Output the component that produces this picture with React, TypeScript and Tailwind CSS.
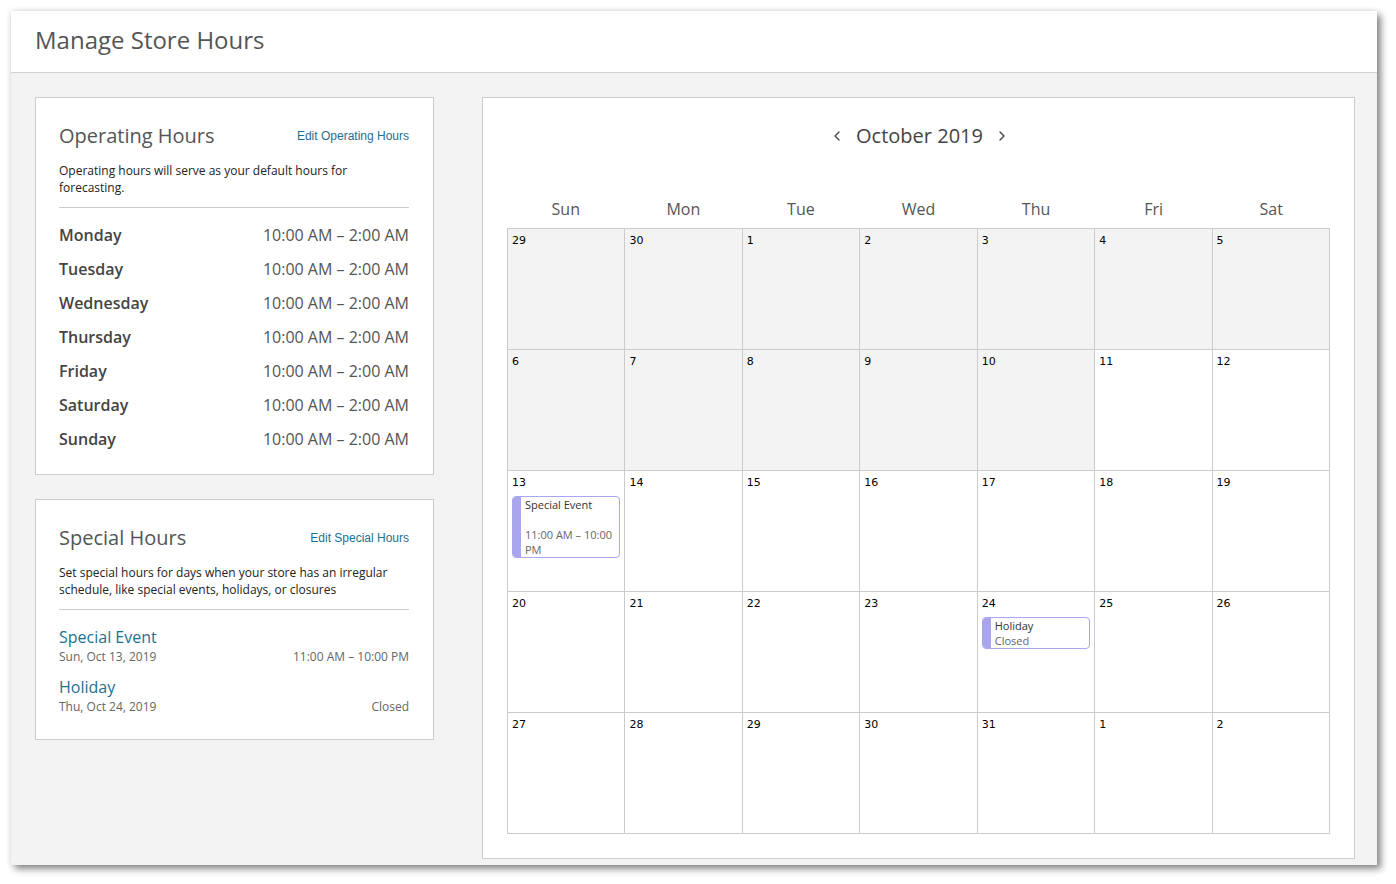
import { ChevronLeft, ChevronRight } from "lucide-react";

const days = ["Monday", "Tuesday", "Wednesday", "Thursday", "Friday", "Saturday", "Sunday"];
const weekdays = ["Sun", "Mon", "Tue", "Wed", "Thu", "Fri", "Sat"];

// 5 weeks, first row starts at Sep 29
const cells = [
  29, 30, 1, 2, 3, 4, 5,
  6, 7, 8, 9, 10, 11, 12,
  13, 14, 15, 16, 17, 18, 19,
  20, 21, 22, 23, 24, 25, 26,
  27, 28, 29, 30, 31, 1, 2,
];

const openSans = "font-['Open_Sans',_'Liberation_Sans',_sans-serif]";

function EventChip({ title, time, gap }: { title: string; time: string; gap?: boolean }) {
  return (
    <div className="ml-[4px] mr-[4px] mt-[6px] flex overflow-hidden rounded-[4px] border border-[#a9a5ef] bg-white">
      <div className="w-[8px] shrink-0 bg-[#aaa6ee]" />
      <div className={`${openSans} pl-[4px] pr-[6px] text-[11px] leading-[15px]`}>
        <div className="text-[#333]">{title}</div>
        <div className={`${gap ? "mt-[15px]" : ""} text-[#666]`}>{time}</div>
      </div>
    </div>
  );
}

export default function App() {
  return (
    <div className="h-[884px] w-[1396px] bg-white pl-[11px] pt-[11px]">
      <div
        className={`${openSans} flex h-[854px] w-[1366px] flex-col overflow-hidden bg-[#f3f3f3] shadow-[4px_4px_7px_rgba(0,0,0,0.45),0_0_6px_rgba(0,0,0,0.12)]`}
      >
        {/* Header */}
        <div className="flex h-[62px] shrink-0 items-center border-b border-[#d2d2d2] bg-white pb-[3px] pl-[24px]">
          <h1 className="text-[24px] leading-[30px] text-[#555]">Manage Store Hours</h1>
        </div>

        <div className="flex pl-[24px] pt-[24px]">
          {/* Left column */}
          <div className="flex w-[399px] shrink-0 flex-col gap-[24px]">
            {/* Operating hours */}
            <div className="border border-[#cccccc] bg-white pb-[18px] pl-[23px] pr-[24px] pt-[23px]">
              <div className="flex items-center justify-between">
                <h2 className="text-[20px] leading-[30px] text-[#555]">Operating Hours</h2>
                <a className="font-['Liberation_Sans',_Arial,_sans-serif] text-[12px] text-[#1d6f92]">
                  Edit Operating Hours
                </a>
              </div>
              <p className="mt-[11px] pr-[50px] text-[12px] leading-[17px] text-[#222]">
                Operating hours will serve as your default hours for forecasting.
              </p>
              <div className="mt-[11px] border-t border-[#cccccc]" />
              <div className="mt-[10px]">
                {days.map((d) => (
                  <div key={d} className="flex h-[34px] items-center justify-between text-[16px]">
                    <span className="font-semibold text-[#444]">{d}</span>
                    <span className="text-[#555]">10:00 AM – 2:00 AM</span>
                  </div>
                ))}
              </div>
            </div>

            {/* Special hours */}
            <div className="border border-[#cccccc] bg-white pb-[24px] pl-[23px] pr-[24px] pt-[23px]">
              <div className="flex items-center justify-between">
                <h2 className="text-[20px] leading-[30px] text-[#555]">Special Hours</h2>
                <a className="font-['Liberation_Sans',_Arial,_sans-serif] text-[12px] text-[#1d6f92]">
                  Edit Special Hours
                </a>
              </div>
              <p className="mt-[11px] pr-[10px] text-[12px] leading-[17px] text-[#222]">
                Set special hours for days when your store has an irregular schedule, like special events,
                holidays, or closures
              </p>
              <div className="mt-[11px] border-t border-[#cccccc]" />
              <div className="mt-[16px]">
                <div className="text-[16px] leading-[22px] text-[#1d6f92]">Special Event</div>
                <div className="flex justify-between text-[12px] leading-[17px] text-[#666]">
                  <span>Sun, Oct 13, 2019</span>
                  <span>11:00 AM – 10:00 PM</span>
                </div>
              </div>
              <div className="mt-[12px]">
                <div className="text-[16px] leading-[21px] text-[#1d6f92]">Holiday</div>
                <div className="flex justify-between text-[12px] leading-[17px] text-[#666]">
                  <span>Thu, Oct 24, 2019</span>
                  <span>Closed</span>
                </div>
              </div>
            </div>
          </div>

          {/* Calendar */}
          <div className="ml-[48px] w-[873px] shrink-0 border border-[#cccccc] bg-white px-[24px] pb-[24px] pt-[24px]">
            <div className="flex items-center justify-center gap-[11px] pl-[2px] text-[#444]">
              <ChevronLeft size={16} strokeWidth={2} />
              <span className="text-[20px] leading-[28px]">October 2019</span>
              <ChevronRight size={16} strokeWidth={2} />
            </div>
            <div className="mt-[48px] grid grid-cols-7">
              {weekdays.map((w) => (
                <div key={w} className="text-center text-[16px] leading-[22px] text-[#555]">
                  {w}
                </div>
              ))}
            </div>
            <div className="mt-[8px] grid grid-cols-7 border-l border-t border-[#cccccc]">
              {cells.map((n, i) => (
                <div
                  key={i}
                  className={`h-[121px] border-b border-r border-[#cccccc] ${i < 12 ? "bg-[#f3f3f3]" : "bg-white"}`}
                >
                  <div className="pl-[4px] pt-[5px] font-['DejaVu_Sans',_Verdana,_sans-serif] text-[11px] leading-[14px] text-black">
                    {n}
                  </div>
                  {i === 14 && <EventChip title="Special Event" time="11:00 AM – 10:00 PM" gap />}
                  {i === 25 && <EventChip title="Holiday" time="Closed" />}
                </div>
              ))}
            </div>
          </div>
        </div>
      </div>
    </div>
  );
}
